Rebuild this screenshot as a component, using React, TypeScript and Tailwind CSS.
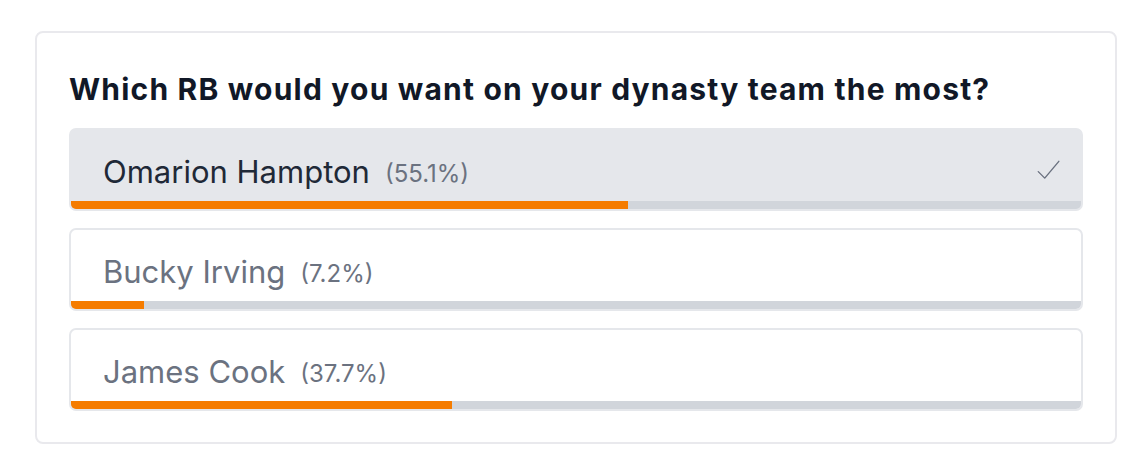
import React from "react";

const options = [
  { name: "Omarion Hampton", pct: 55.1, selected: true },
  { name: "Bucky Irving", pct: 7.2, selected: false },
  { name: "James Cook", pct: 37.7, selected: false },
];

export default function App() {
  return (
    <div className="w-[1140px] h-[472px] bg-white pt-[31px] pl-[35px]" style={{ fontFamily: "Inter, 'Noto Sans', sans-serif" }}>
      <div className="w-[1082px] h-[413px] rounded-[8px] border-2 border-[#e9e9ed] px-[32px] pt-[38px]">
        <h2 className="text-[30px] leading-[36px] font-bold text-[#111827] tracking-[1.2px]">
          Which RB would you want on your dynasty team the most?
        </h2>
        <div className="mt-[21px] flex flex-col gap-[17px]">
          {options.map((o) => (
            <div
              key={o.name}
              className={`h-[83px] rounded-[7px] border-2 border-[#e5e7eb] flex flex-col overflow-hidden ${o.selected ? "bg-[#e5e7eb]" : "bg-white"}`}
            >
              <div className="flex-1 flex items-center pl-[32px] pr-[20px] pt-[12px]">
                <span className={`text-[31px] leading-[38px] ${o.selected ? "text-[#1f2937]" : "text-[#6b7280]"}`}>{o.name}</span>
                <span className="ml-[15px] text-[24px] leading-[30px] text-[#6b7280] mt-[4px]">({o.pct}%)</span>
                {o.selected && (
                  <svg className="ml-auto -mt-[4px]" width="26" height="26" viewBox="0 0 24 24" fill="none" stroke="#6b7280" strokeWidth="1.3" strokeLinecap="round" strokeLinejoin="round">
                    <path d="M3 13.5l6 6L22 4" />
                  </svg>
                )}
              </div>
              <div className="h-[8px] bg-[#d1d5db]">
                <div className="h-full bg-[#f57c00]" style={{ width: `${o.pct}%` }} />
              </div>
            </div>
          ))}
        </div>
      </div>
    </div>
  );
}
